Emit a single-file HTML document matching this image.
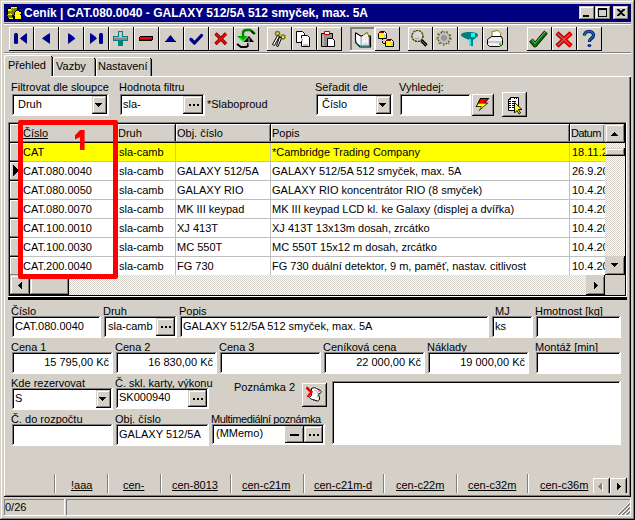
<!DOCTYPE html>
<html><head><meta charset="utf-8"><style>
html,body{margin:0;padding:0;}
body{width:635px;height:520px;position:relative;overflow:hidden;background:#d4d0c8;font-family:"Liberation Sans",sans-serif;}
div{position:absolute;box-sizing:content-box;}
.t{position:absolute;font-size:11px;line-height:13px;white-space:pre;color:#000;}
.tt{position:absolute;font-weight:bold;font-size:12px;line-height:15px;white-space:pre;color:#fff;}
u{text-decoration:underline;text-underline-offset:1px;}
</style></head><body>
<div style="left:0px;top:0px;width:635px;height:520px;background:#d4d0c8;"></div>
<div style="left:1px;top:1px;width:633px;height:1px;background:#ffffff;"></div>
<div style="left:1px;top:1px;width:1px;height:517px;background:#ffffff;"></div>
<div style="left:0px;top:519px;width:635px;height:1px;background:#000000;"></div>
<div style="left:634px;top:0px;width:1px;height:520px;background:#000000;"></div>
<div style="left:1px;top:518px;width:633px;height:1px;background:#808080;"></div>
<div style="left:633px;top:1px;width:1px;height:518px;background:#808080;"></div>
<div style="left:4px;top:4px;width:627px;height:18px;background:#000080;"></div>
<span class="tt" style="left:24px;top:6px">Ceník | CAT.080.0040 - GALAXY 512/5A 512 smyček, max. 5A</span>
<div style="left:579px;top:6px;width:16px;height:14px;background:#d4d0c8;"></div>
<div style="left:579px;top:6px;width:16px;height:1px;background:#d4d0c8;"></div>
<div style="left:579px;top:6px;width:1px;height:14px;background:#d4d0c8;"></div>
<div style="left:580px;top:7px;width:14px;height:1px;background:#ffffff;"></div>
<div style="left:580px;top:7px;width:1px;height:12px;background:#ffffff;"></div>
<div style="left:579px;top:19px;width:16px;height:1px;background:#000000;"></div>
<div style="left:594px;top:6px;width:1px;height:14px;background:#000000;"></div>
<div style="left:580px;top:18px;width:14px;height:1px;background:#808080;"></div>
<div style="left:593px;top:7px;width:1px;height:12px;background:#808080;"></div>
<div style="left:595px;top:6px;width:16px;height:14px;background:#d4d0c8;"></div>
<div style="left:595px;top:6px;width:16px;height:1px;background:#d4d0c8;"></div>
<div style="left:595px;top:6px;width:1px;height:14px;background:#d4d0c8;"></div>
<div style="left:596px;top:7px;width:14px;height:1px;background:#ffffff;"></div>
<div style="left:596px;top:7px;width:1px;height:12px;background:#ffffff;"></div>
<div style="left:595px;top:19px;width:16px;height:1px;background:#000000;"></div>
<div style="left:610px;top:6px;width:1px;height:14px;background:#000000;"></div>
<div style="left:596px;top:18px;width:14px;height:1px;background:#808080;"></div>
<div style="left:609px;top:7px;width:1px;height:12px;background:#808080;"></div>
<div style="left:613px;top:6px;width:16px;height:14px;background:#d4d0c8;"></div>
<div style="left:613px;top:6px;width:16px;height:1px;background:#d4d0c8;"></div>
<div style="left:613px;top:6px;width:1px;height:14px;background:#d4d0c8;"></div>
<div style="left:614px;top:7px;width:14px;height:1px;background:#ffffff;"></div>
<div style="left:614px;top:7px;width:1px;height:12px;background:#ffffff;"></div>
<div style="left:613px;top:19px;width:16px;height:1px;background:#000000;"></div>
<div style="left:628px;top:6px;width:1px;height:14px;background:#000000;"></div>
<div style="left:614px;top:18px;width:14px;height:1px;background:#808080;"></div>
<div style="left:627px;top:7px;width:1px;height:12px;background:#808080;"></div>
<div style="left:583px;top:15px;width:6px;height:2px;background:#000000;"></div>
<div style="left:598px;top:8px;width:9px;height:9px;background:#000000;"></div>
<div style="left:599px;top:10px;width:7px;height:6px;background:#d4d0c8;"></div>
<svg style="position:absolute;left:617px;top:9px;overflow:visible" width="8" height="7" viewBox="0 0 8 7"><path d="M0 0h2l2 2 2-2h2v1l-3 2.5 3 2.5v1h-2l-2-2-2 2h-2v-1l3-2.5-3-2.5z" fill="#000"/></svg>
<div style="left:4px;top:23px;width:627px;height:1px;background:#808080;"></div>
<div style="left:4px;top:24px;width:627px;height:1px;background:#ffffff;"></div>
<div style="left:9px;top:27px;width:24px;height:1px;background:#ffffff;"></div>
<div style="left:9px;top:27px;width:1px;height:23px;background:#ffffff;"></div>
<div style="left:9px;top:50px;width:25px;height:1px;background:#000000;"></div>
<div style="left:33px;top:27px;width:1px;height:24px;background:#000000;"></div>
<div style="left:34px;top:27px;width:24px;height:1px;background:#ffffff;"></div>
<div style="left:34px;top:27px;width:1px;height:23px;background:#ffffff;"></div>
<div style="left:34px;top:50px;width:25px;height:1px;background:#000000;"></div>
<div style="left:58px;top:27px;width:1px;height:24px;background:#000000;"></div>
<div style="left:59px;top:27px;width:24px;height:1px;background:#ffffff;"></div>
<div style="left:59px;top:27px;width:1px;height:23px;background:#ffffff;"></div>
<div style="left:59px;top:50px;width:25px;height:1px;background:#000000;"></div>
<div style="left:83px;top:27px;width:1px;height:24px;background:#000000;"></div>
<div style="left:84px;top:27px;width:24px;height:1px;background:#ffffff;"></div>
<div style="left:84px;top:27px;width:1px;height:23px;background:#ffffff;"></div>
<div style="left:84px;top:50px;width:25px;height:1px;background:#000000;"></div>
<div style="left:108px;top:27px;width:1px;height:24px;background:#000000;"></div>
<div style="left:109px;top:27px;width:24px;height:1px;background:#ffffff;"></div>
<div style="left:109px;top:27px;width:1px;height:23px;background:#ffffff;"></div>
<div style="left:109px;top:50px;width:25px;height:1px;background:#000000;"></div>
<div style="left:133px;top:27px;width:1px;height:24px;background:#000000;"></div>
<div style="left:134px;top:27px;width:24px;height:1px;background:#ffffff;"></div>
<div style="left:134px;top:27px;width:1px;height:23px;background:#ffffff;"></div>
<div style="left:134px;top:50px;width:25px;height:1px;background:#000000;"></div>
<div style="left:158px;top:27px;width:1px;height:24px;background:#000000;"></div>
<div style="left:159px;top:27px;width:24px;height:1px;background:#ffffff;"></div>
<div style="left:159px;top:27px;width:1px;height:23px;background:#ffffff;"></div>
<div style="left:159px;top:50px;width:25px;height:1px;background:#000000;"></div>
<div style="left:183px;top:27px;width:1px;height:24px;background:#000000;"></div>
<div style="left:184px;top:27px;width:24px;height:1px;background:#ffffff;"></div>
<div style="left:184px;top:27px;width:1px;height:23px;background:#ffffff;"></div>
<div style="left:184px;top:50px;width:25px;height:1px;background:#000000;"></div>
<div style="left:208px;top:27px;width:1px;height:24px;background:#000000;"></div>
<div style="left:209px;top:27px;width:24px;height:1px;background:#ffffff;"></div>
<div style="left:209px;top:27px;width:1px;height:23px;background:#ffffff;"></div>
<div style="left:209px;top:50px;width:25px;height:1px;background:#000000;"></div>
<div style="left:233px;top:27px;width:1px;height:24px;background:#000000;"></div>
<div style="left:234px;top:27px;width:24px;height:1px;background:#ffffff;"></div>
<div style="left:234px;top:27px;width:1px;height:23px;background:#ffffff;"></div>
<div style="left:234px;top:50px;width:25px;height:1px;background:#000000;"></div>
<div style="left:258px;top:27px;width:1px;height:24px;background:#000000;"></div>
<div style="left:267px;top:27px;width:24px;height:1px;background:#ffffff;"></div>
<div style="left:267px;top:27px;width:1px;height:23px;background:#ffffff;"></div>
<div style="left:267px;top:50px;width:25px;height:1px;background:#000000;"></div>
<div style="left:291px;top:27px;width:1px;height:24px;background:#000000;"></div>
<div style="left:292px;top:27px;width:24px;height:1px;background:#ffffff;"></div>
<div style="left:292px;top:27px;width:1px;height:23px;background:#ffffff;"></div>
<div style="left:292px;top:50px;width:25px;height:1px;background:#000000;"></div>
<div style="left:316px;top:27px;width:1px;height:24px;background:#000000;"></div>
<div style="left:317px;top:27px;width:24px;height:1px;background:#ffffff;"></div>
<div style="left:317px;top:27px;width:1px;height:23px;background:#ffffff;"></div>
<div style="left:317px;top:50px;width:25px;height:1px;background:#000000;"></div>
<div style="left:341px;top:27px;width:1px;height:24px;background:#000000;"></div>
<div style="left:350px;top:27px;width:25px;height:24px;background:#d4d0c8;"></div>
<div style="left:350px;top:27px;width:25px;height:1px;background:#808080;"></div>
<div style="left:350px;top:27px;width:1px;height:24px;background:#808080;"></div>
<div style="left:351px;top:28px;width:23px;height:1px;background:#808080;"></div>
<div style="left:351px;top:28px;width:1px;height:22px;background:#808080;"></div>
<div style="left:350px;top:50px;width:25px;height:1px;background:#ffffff;"></div>
<div style="left:374px;top:27px;width:1px;height:24px;background:#ffffff;"></div>
<div style="left:375px;top:27px;width:24px;height:1px;background:#ffffff;"></div>
<div style="left:375px;top:27px;width:1px;height:23px;background:#ffffff;"></div>
<div style="left:375px;top:50px;width:25px;height:1px;background:#000000;"></div>
<div style="left:399px;top:27px;width:1px;height:24px;background:#000000;"></div>
<div style="left:408px;top:27px;width:24px;height:1px;background:#ffffff;"></div>
<div style="left:408px;top:27px;width:1px;height:23px;background:#ffffff;"></div>
<div style="left:408px;top:50px;width:25px;height:1px;background:#000000;"></div>
<div style="left:432px;top:27px;width:1px;height:24px;background:#000000;"></div>
<div style="left:433px;top:27px;width:24px;height:1px;background:#ffffff;"></div>
<div style="left:433px;top:27px;width:1px;height:23px;background:#ffffff;"></div>
<div style="left:433px;top:50px;width:25px;height:1px;background:#000000;"></div>
<div style="left:457px;top:27px;width:1px;height:24px;background:#000000;"></div>
<div style="left:458px;top:27px;width:24px;height:1px;background:#ffffff;"></div>
<div style="left:458px;top:27px;width:1px;height:23px;background:#ffffff;"></div>
<div style="left:458px;top:50px;width:25px;height:1px;background:#000000;"></div>
<div style="left:482px;top:27px;width:1px;height:24px;background:#000000;"></div>
<div style="left:483px;top:27px;width:24px;height:1px;background:#ffffff;"></div>
<div style="left:483px;top:27px;width:1px;height:23px;background:#ffffff;"></div>
<div style="left:483px;top:50px;width:25px;height:1px;background:#000000;"></div>
<div style="left:507px;top:27px;width:1px;height:24px;background:#000000;"></div>
<div style="left:527px;top:27px;width:24px;height:1px;background:#ffffff;"></div>
<div style="left:527px;top:27px;width:1px;height:23px;background:#ffffff;"></div>
<div style="left:527px;top:50px;width:25px;height:1px;background:#000000;"></div>
<div style="left:551px;top:27px;width:1px;height:24px;background:#000000;"></div>
<div style="left:552px;top:27px;width:24px;height:1px;background:#ffffff;"></div>
<div style="left:552px;top:27px;width:1px;height:23px;background:#ffffff;"></div>
<div style="left:552px;top:50px;width:25px;height:1px;background:#000000;"></div>
<div style="left:576px;top:27px;width:1px;height:24px;background:#000000;"></div>
<div style="left:577px;top:27px;width:24px;height:1px;background:#ffffff;"></div>
<div style="left:577px;top:27px;width:1px;height:23px;background:#ffffff;"></div>
<div style="left:577px;top:50px;width:25px;height:1px;background:#000000;"></div>
<div style="left:601px;top:27px;width:1px;height:24px;background:#000000;"></div>
<div style="left:4px;top:52px;width:627px;height:1px;background:#808080;"></div>
<div style="left:4px;top:53px;width:627px;height:1px;background:#ffffff;"></div>
<svg style="position:absolute;left:9px;top:27px;overflow:visible" width="25" height="24" viewBox="0 0 25 24"><rect x="5" y="6" width="4" height="11" rx="1.5" fill="#000080"/><rect x="6" y="7" width="1" height="2" fill="#0000ff"/><polygon points="11,11.5 18,6 18,17" fill="#000080"/><line x1="12" y1="11" x2="17" y2="7" stroke="#0000ff" stroke-width="1"/></svg>
<svg style="position:absolute;left:34px;top:27px;overflow:visible" width="25" height="24" viewBox="0 0 25 24"><polygon points="8,11.5 16,6 16,17" fill="#000080"/><line x1="9" y1="11" x2="15" y2="7" stroke="#0000ff"/></svg>
<svg style="position:absolute;left:59px;top:27px;overflow:visible" width="25" height="24" viewBox="0 0 25 24"><polygon points="9,6 9,17 16.5,11.5" fill="#000080"/><line x1="10" y1="7" x2="15" y2="10.5" stroke="#0000ff"/></svg>
<svg style="position:absolute;left:84px;top:27px;overflow:visible" width="25" height="24" viewBox="0 0 25 24"><polygon points="6,6 6,17 13,11.5" fill="#000080"/><line x1="7" y1="7" x2="12" y2="10.5" stroke="#0000ff"/><rect x="15" y="6" width="4" height="11" rx="1.5" fill="#000080"/><rect x="16" y="7" width="1" height="2" fill="#0000ff"/></svg>
<svg style="position:absolute;left:109px;top:27px;overflow:visible" width="25" height="24" viewBox="0 0 25 24" shape-rendering="crispEdges"><path d="M9 4h5v5h5v5h-5v5h-5v-5h-5v-5h5z" fill="#008080"/><rect x="10" y="5" width="3" height="5" fill="#c8c8c8"/><rect x="5" y="10" width="13" height="3" fill="#888"/><rect x="5" y="10" width="13" height="1" fill="#b0b0b0"/></svg>
<svg style="position:absolute;left:134px;top:27px;overflow:visible" width="25" height="24" viewBox="0 0 25 24" shape-rendering="crispEdges"><rect x="5" y="9" width="14" height="5" rx="2" fill="#000"/><rect x="6" y="10" width="12" height="2" fill="#ff0000"/><rect x="6" y="12" width="12" height="1" fill="#800000"/></svg>
<svg style="position:absolute;left:159px;top:27px;overflow:visible" width="25" height="24" viewBox="0 0 25 24"><polygon points="6,15 11.5,8 17,15" fill="#000080"/><line x1="8" y1="13" x2="11" y2="9.5" stroke="#0000ff"/><rect x="6" y="14" width="11" height="1" fill="#000"/></svg>
<svg style="position:absolute;left:184px;top:27px;overflow:visible" width="25" height="24" viewBox="0 0 25 24"><polyline points="7,12.5 10.5,16 17.5,8.5" fill="none" stroke="#000080" stroke-width="3.2" stroke-linecap="round" stroke-linejoin="round"/><circle cx="7" cy="12" r="1.3" fill="#0000ff"/></svg>
<svg style="position:absolute;left:209px;top:27px;overflow:visible" width="25" height="24" viewBox="0 0 25 24"><path d="M6.5 6.5L17 17M17 6.5L6.5 17" stroke="#600000" stroke-width="3.2"/><path d="M6.5 6.5L17 17M17 6.5L6.5 17" stroke="#ff0000" stroke-width="1.8"/></svg>
<svg style="position:absolute;left:234px;top:27px;overflow:visible" width="25" height="24" viewBox="0 0 25 24"><path d="M9 13V6c0-2 2-3 4-3h3l3 2 2 2" fill="none" stroke="#008000" stroke-width="2.4"/><path d="M17 4l3 3" stroke="#000" stroke-width="1.3"/><polygon points="3,9 14,9 8.5,14" fill="#00a000"/><path d="M6 11l3 3 3-3" stroke="#00ff00" stroke-width="1.2" fill="none"/><path d="M14 16v2c0 1-1 2-3 2H7L3 17" fill="none" stroke="#000" stroke-width="1.8"/><polygon points="9.5,15 20,15 15,9" fill="#000"/><path d="M15 11v7" stroke="#bbb" stroke-width="1"/></svg>
<svg style="position:absolute;left:267px;top:27px;overflow:visible" width="25" height="24" viewBox="0 0 25 24"><circle cx="10.5" cy="6.5" r="2" fill="none" stroke="#808000" stroke-width="1.6"/><circle cx="16" cy="10" r="2" fill="none" stroke="#808000" stroke-width="1.6"/><polygon points="10.5,8.5 12.5,9.5 7.5,18.5 5.5,17.5" fill="#fff" stroke="#000" stroke-width="1"/><polygon points="12.5,10 14.5,11 11,19.5 9.5,19" fill="#fff" stroke="#000" stroke-width="1"/></svg>
<svg style="position:absolute;left:292px;top:27px;overflow:visible" width="25" height="24" viewBox="0 0 25 24"><path d="M4.5 4.5h6l2 2v9h-8z" fill="#fff" stroke="#000"/><path d="M9.5 8.5h6l2 2v9h-8z" fill="#fff" stroke="#000"/><path d="M11 17h5v2h-5z" fill="#c0c0c0"/><path d="M9 11h2v3H9z" fill="#c0c0c0"/></svg>
<svg style="position:absolute;left:317px;top:27px;overflow:visible" width="25" height="24" viewBox="0 0 25 24"><path d="M4.5 6.5h11v13h-11z" fill="#909090" stroke="#000"/><path d="M7.5 4.5h5v3h-5z" fill="#fff" stroke="#c00000"/><path d="M10.5 11.5h5l2 2v6h-7z" fill="#fff" stroke="#000"/><rect x="5" y="7" width="2" height="12" fill="#b0b0b0"/></svg>
<svg style="position:absolute;left:350px;top:27px;overflow:visible" width="25" height="24" viewBox="0 0 25 24"><path d="M6 6l5 3v10l-5-4z" fill="#fff"/><path d="M11.5 9l1.5-1 4-2.5 1 1.5v10l-6 2z" fill="#f4f4f4"/><path d="M11 9.5v9" stroke="#a0a0a0"/><path d="M13 18l4-2" stroke="#c0c0c0"/><path d="M5.5 5.5v10l4.5 4.5h10.5v-11h-2.5" fill="none" stroke="#000" stroke-width="1.1"/><path d="M6 6l5 3.2 2-1" fill="none" stroke="#000" stroke-width="1.1"/><path d="M13.5 8l3.5-2.5 1.5 2.5" fill="none" stroke="#808000" stroke-width="1.1"/><path d="M6 13.5v2l4 3.5h9.5V9.5" fill="none" stroke="#008080" stroke-width="1"/></svg>
<svg style="position:absolute;left:375px;top:27px;overflow:visible" width="25" height="24" viewBox="0 0 25 24"><g transform="translate(3,3)"><path d="M0.5 3.5l2-2h4l2 2v5h-8z" fill="#fff" stroke="#000"/><rect x="1" y="4" width="5" height="4" fill="#ffff00"/><rect x="6" y="4" width="2" height="4" fill="#c8c8c8"/><path d="M1 2.5h5" stroke="#a00000" stroke-width="1.3"/></g><g transform="translate(10,11)"><path d="M0.5 3.5l2-2h4l2 2v5h-8z" fill="#fff" stroke="#000"/><rect x="1" y="4" width="5" height="4" fill="#ffff00"/><rect x="6" y="4" width="2" height="4" fill="#c8c8c8"/><path d="M1 2.5h5" stroke="#a00000" stroke-width="1.3"/></g><rect x="7" y="12" width="1" height="1" fill="#000"/><rect x="7" y="14" width="1" height="2" fill="#000"/><rect x="8" y="16" width="2" height="1" fill="#000"/></svg>
<svg style="position:absolute;left:408px;top:27px;overflow:visible" width="25" height="24" viewBox="0 0 25 24"><circle cx="9.5" cy="9" r="5.5" fill="#d8d8d8" stroke="#000" stroke-width="1.2" stroke-dasharray="2 1"/><circle cx="9.5" cy="9" r="5.5" fill="none" stroke="#808000" stroke-width="0.6"/><path d="M7 11a3 3 0 0 0 4 0" stroke="#999" fill="none"/><path d="M13.5 13.5l5 5" stroke="#000" stroke-width="3.2"/><path d="M14 14l4 4" stroke="#808000" stroke-width="1"/></svg>
<svg style="position:absolute;left:433px;top:27px;overflow:visible" width="25" height="24" viewBox="0 0 25 24"><circle cx="11" cy="11" r="6" fill="#c0c0c0" stroke="#404040" stroke-width="1.2" stroke-dasharray="1.5 1.5"/><circle cx="11" cy="11" r="7" fill="none" stroke="#808000" stroke-width="1.3" stroke-dasharray="2 3"/><circle cx="11" cy="11" r="2.3" fill="#a0a0a0" stroke="#808080"/></svg>
<svg style="position:absolute;left:458px;top:27px;overflow:visible" width="25" height="24" viewBox="0 0 25 24"><path d="M3 8c0-2 3-3 8.5-3S20 6 20 8c0 1.5-2 3-5 5v6h-3.5v-6C6 11 3 9.5 3 8z" fill="#008080"/><rect x="13" y="6" width="4" height="4" fill="#00ffff"/><rect x="11" y="12" width="2" height="7" fill="#00ffff"/></svg>
<svg style="position:absolute;left:483px;top:27px;overflow:visible" width="25" height="24" viewBox="0 0 25 24"><path d="M9 4.5l6-1 3 3-2 5h-7z" fill="#fff" stroke="#808000"/><path d="M4.5 12.5l4-3h10l1 3v5l-3 2h-10l-2-2z" fill="#f0f0f0" stroke="#000"/><path d="M5 15h14" stroke="#a0a0a0"/><rect x="16" y="16" width="2" height="2" fill="#00ff00"/></svg>
<svg style="position:absolute;left:527px;top:27px;overflow:visible" width="25" height="24" viewBox="0 0 25 24"><path d="M4 13l4 5 11-13" fill="none" stroke="#000" stroke-width="4.5" stroke-linejoin="round"/><path d="M4 13l4 5 11-13" fill="none" stroke="#008000" stroke-width="3"/><path d="M5 12.3l3 4 10.5-12" fill="none" stroke="#a0a0a0" stroke-width="0.9"/></svg>
<svg style="position:absolute;left:552px;top:27px;overflow:visible" width="25" height="24" viewBox="0 0 25 24"><path d="M5 6L19 19M19 6L5 19" stroke="#c00000" stroke-width="4.5"/><path d="M5 6L19 19M19 6L5 19" stroke="#ff0000" stroke-width="3"/><path d="M6 7L18 18M18 7L6 18" stroke="#909090" stroke-width="1"/></svg>
<svg style="position:absolute;left:577px;top:27px;overflow:visible" width="25" height="24" viewBox="0 0 25 24"><path d="M7.5 8.5c0-2.5 2-4 4.5-4s4.5 1.5 4.5 3.8c0 1.8-1.3 2.7-2.5 3.5s-1.6 1.7-1.6 3.2" fill="none" stroke="#000080" stroke-width="3.2"/><path d="M7.5 8.5c0-2.5 2-4 4.5-4s4.5 1.5 4.5 3.8c0 1.8-1.3 2.7-2.5 3.5s-1.6 1.7-1.6 3.2" fill="none" stroke="#008080" stroke-width="1.4"/><ellipse cx="12.4" cy="18.6" rx="1.9" ry="1.4" fill="#000080"/><circle cx="12.4" cy="18.5" r="0.6" fill="#008080"/></svg>
<svg style="position:absolute;left:6px;top:6px;overflow:visible" width="16" height="14" viewBox="0 0 16 14" shape-rendering="crispEdges"><rect x="5" y="0" width="6" height="1" fill="#000000"/><rect x="4" y="1" width="1" height="1" fill="#000000"/><rect x="5" y="1" width="6" height="1" fill="#ffff00"/><rect x="11" y="1" width="1" height="1" fill="#000000"/><rect x="2" y="2" width="3" height="1" fill="#000000"/><rect x="5" y="2" width="1" height="1" fill="#c0c0c0"/><rect x="6" y="2" width="1" height="1" fill="#808000"/><rect x="7" y="2" width="1" height="1" fill="#c0c0c0"/><rect x="8" y="2" width="3" height="1" fill="#808000"/><rect x="11" y="2" width="2" height="1" fill="#000000"/><rect x="1" y="3" width="1" height="1" fill="#000000"/><rect x="2" y="3" width="3" height="1" fill="#ffff00"/><rect x="5" y="3" width="6" height="1" fill="#808000"/><rect x="11" y="3" width="1" height="1" fill="#000000"/><rect x="1" y="4" width="1" height="1" fill="#000000"/><rect x="2" y="4" width="3" height="1" fill="#ffff00"/><rect x="5" y="4" width="1" height="1" fill="#c0c0c0"/><rect x="6" y="4" width="4" height="1" fill="#808000"/><rect x="10" y="4" width="1" height="1" fill="#000000"/><rect x="1" y="5" width="1" height="1" fill="#000000"/><rect x="2" y="5" width="7" height="1" fill="#808000"/><rect x="9" y="5" width="1" height="1" fill="#000000"/><rect x="10" y="5" width="3" height="1" fill="#ffff00"/><rect x="13" y="5" width="1" height="1" fill="#000000"/><rect x="1" y="6" width="1" height="1" fill="#000000"/><rect x="2" y="6" width="6" height="1" fill="#808000"/><rect x="8" y="6" width="1" height="1" fill="#000000"/><rect x="9" y="6" width="6" height="1" fill="#ffff00"/><rect x="15" y="6" width="1" height="1" fill="#000000"/><rect x="1" y="7" width="1" height="1" fill="#000000"/><rect x="2" y="7" width="2" height="1" fill="#808000"/><rect x="4" y="7" width="1" height="1" fill="#c0c0c0"/><rect x="5" y="7" width="3" height="1" fill="#808000"/><rect x="8" y="7" width="1" height="1" fill="#000000"/><rect x="9" y="7" width="6" height="1" fill="#ffff00"/><rect x="15" y="7" width="1" height="1" fill="#000000"/><rect x="0" y="8" width="2" height="1" fill="#000000"/><rect x="2" y="8" width="4" height="1" fill="#ffff00"/><rect x="6" y="8" width="2" height="1" fill="#808000"/><rect x="8" y="8" width="1" height="1" fill="#000000"/><rect x="9" y="8" width="5" height="1" fill="#ffff00"/><rect x="14" y="8" width="1" height="1" fill="#000000"/><rect x="15" y="8" width="1" height="1" fill="#000000"/><rect x="1" y="9" width="5" height="1" fill="#808000"/><rect x="6" y="9" width="2" height="1" fill="#000000"/><rect x="8" y="9" width="1" height="1" fill="#808000"/><rect x="9" y="9" width="6" height="1" fill="#ffff00"/><rect x="15" y="9" width="1" height="1" fill="#000000"/><rect x="1" y="10" width="1" height="1" fill="#000000"/><rect x="2" y="10" width="4" height="1" fill="#808000"/><rect x="6" y="10" width="3" height="1" fill="#000000"/><rect x="9" y="10" width="6" height="1" fill="#ffff00"/><rect x="15" y="10" width="1" height="1" fill="#000000"/><rect x="2" y="11" width="5" height="1" fill="#808000"/><rect x="7" y="11" width="2" height="1" fill="#000000"/><rect x="9" y="11" width="6" height="1" fill="#ffff00"/><rect x="15" y="11" width="1" height="1" fill="#000000"/><rect x="2" y="12" width="1" height="1" fill="#000000"/><rect x="3" y="12" width="4" height="1" fill="#ffff00"/><rect x="7" y="12" width="2" height="1" fill="#000000"/><rect x="9" y="12" width="6" height="1" fill="#ffff00"/><rect x="15" y="12" width="1" height="1" fill="#000000"/><rect x="2" y="13" width="13" height="1" fill="#000000"/></svg>
<div style="left:4px;top:76px;width:627px;height:1px;background:#ffffff;"></div>
<div style="left:4px;top:55px;width:1px;height:442px;background:#ffffff;"></div>
<div style="left:630px;top:76px;width:1px;height:421px;background:#000000;"></div>
<div style="left:629px;top:77px;width:1px;height:419px;background:#808080;"></div>
<div style="left:4px;top:496px;width:627px;height:1px;background:#000000;"></div>
<div style="left:5px;top:495px;width:625px;height:1px;background:#808080;"></div>
<div style="left:5px;top:56px;width:46px;height:21px;background:#d4d0c8;"></div>
<div style="left:6px;top:55px;width:45px;height:1px;background:#ffffff;"></div>
<div style="left:5px;top:56px;width:1px;height:1px;background:#ffffff;"></div>
<div style="left:4px;top:57px;width:1px;height:20px;background:#ffffff;"></div>
<div style="left:51px;top:56px;width:1px;height:20px;background:#808080;"></div>
<div style="left:52px;top:57px;width:1px;height:19px;background:#000000;"></div>
<div style="left:51px;top:56px;width:1px;height:1px;background:#000000;"></div>
<span class="t" style="left:8px;top:59px;">Přehled</span>
<div style="left:54px;top:57px;width:40px;height:1px;background:#ffffff;"></div>
<div style="left:53px;top:58px;width:1px;height:1px;background:#ffffff;"></div>
<div style="left:53px;top:59px;width:1px;height:17px;background:#ffffff;"></div>
<div style="left:94px;top:58px;width:1px;height:18px;background:#808080;"></div>
<div style="left:95px;top:59px;width:1px;height:17px;background:#000000;"></div>
<div style="left:94px;top:58px;width:1px;height:1px;background:#000000;"></div>
<span class="t" style="left:56px;top:60px;">Vazby</span>
<div style="left:97px;top:57px;width:53px;height:1px;background:#ffffff;"></div>
<div style="left:96px;top:58px;width:1px;height:1px;background:#ffffff;"></div>
<div style="left:96px;top:59px;width:1px;height:17px;background:#ffffff;"></div>
<div style="left:150px;top:58px;width:1px;height:18px;background:#808080;"></div>
<div style="left:151px;top:59px;width:1px;height:17px;background:#000000;"></div>
<div style="left:150px;top:58px;width:1px;height:1px;background:#000000;"></div>
<span class="t" style="left:98px;top:60px;">Nastavení</span>
<div style="left:53px;top:76px;width:578px;height:1px;background:#ffffff;"></div>
<span class="t" style="left:11px;top:81px;">Filtrovat dle sloupce</span>
<div style="left:12px;top:94px;width:97px;height:22px;background:#ffffff;"></div>
<div style="left:12px;top:94px;width:96px;height:1px;background:#808080;"></div>
<div style="left:12px;top:94px;width:1px;height:21px;background:#808080;"></div>
<div style="left:13px;top:95px;width:94px;height:1px;background:#000000;"></div>
<div style="left:13px;top:95px;width:1px;height:19px;background:#000000;"></div>
<div style="left:92px;top:96px;width:15px;height:18px;background:#d4d0c8;"></div>
<div style="left:92px;top:96px;width:15px;height:1px;background:#d4d0c8;"></div>
<div style="left:92px;top:96px;width:1px;height:18px;background:#d4d0c8;"></div>
<div style="left:93px;top:97px;width:13px;height:1px;background:#ffffff;"></div>
<div style="left:93px;top:97px;width:1px;height:16px;background:#ffffff;"></div>
<div style="left:92px;top:113px;width:15px;height:1px;background:#000000;"></div>
<div style="left:106px;top:96px;width:1px;height:18px;background:#000000;"></div>
<div style="left:93px;top:112px;width:13px;height:1px;background:#808080;"></div>
<div style="left:105px;top:97px;width:1px;height:16px;background:#808080;"></div>
<svg style="position:absolute;left:95px;top:103px;overflow:visible" width="7" height="4" viewBox="0 0 7 4" shape-rendering="crispEdges"><rect x="0" y="0" width="7" height="1" fill="#000"/><rect x="1" y="1" width="5" height="1" fill="#000"/><rect x="2" y="2" width="3" height="1" fill="#000"/><rect x="3" y="3" width="1" height="1" fill="#000"/></svg>
<span class="t" style="left:18px;top:98px;">Druh</span>
<span class="t" style="left:119px;top:81px;">Hodnota filtru</span>
<div style="left:120px;top:94px;width:85px;height:22px;background:#ffffff;"></div>
<div style="left:120px;top:94px;width:84px;height:1px;background:#808080;"></div>
<div style="left:120px;top:94px;width:1px;height:21px;background:#808080;"></div>
<div style="left:121px;top:95px;width:82px;height:1px;background:#000000;"></div>
<div style="left:121px;top:95px;width:1px;height:19px;background:#000000;"></div>
<div style="left:183px;top:96px;width:20px;height:18px;background:#d4d0c8;"></div>
<div style="left:183px;top:96px;width:20px;height:1px;background:#d4d0c8;"></div>
<div style="left:183px;top:96px;width:1px;height:18px;background:#d4d0c8;"></div>
<div style="left:184px;top:97px;width:18px;height:1px;background:#ffffff;"></div>
<div style="left:184px;top:97px;width:1px;height:16px;background:#ffffff;"></div>
<div style="left:183px;top:113px;width:20px;height:1px;background:#000000;"></div>
<div style="left:202px;top:96px;width:1px;height:18px;background:#000000;"></div>
<div style="left:184px;top:112px;width:18px;height:1px;background:#808080;"></div>
<div style="left:201px;top:97px;width:1px;height:16px;background:#808080;"></div>
<div style="left:189px;top:104px;width:2px;height:2px;background:#000000;"></div>
<div style="left:193px;top:104px;width:2px;height:2px;background:#000000;"></div>
<div style="left:197px;top:104px;width:2px;height:2px;background:#000000;"></div>
<span class="t" style="left:123px;top:98px;">sla-</span>
<span class="t" style="left:207px;top:98px;">*Slaboproud</span>
<span class="t" style="left:315px;top:81px;">Seřadit dle</span>
<div style="left:316px;top:94px;width:77px;height:22px;background:#ffffff;"></div>
<div style="left:316px;top:94px;width:76px;height:1px;background:#808080;"></div>
<div style="left:316px;top:94px;width:1px;height:21px;background:#808080;"></div>
<div style="left:317px;top:95px;width:74px;height:1px;background:#000000;"></div>
<div style="left:317px;top:95px;width:1px;height:19px;background:#000000;"></div>
<div style="left:376px;top:96px;width:15px;height:18px;background:#d4d0c8;"></div>
<div style="left:376px;top:96px;width:15px;height:1px;background:#d4d0c8;"></div>
<div style="left:376px;top:96px;width:1px;height:18px;background:#d4d0c8;"></div>
<div style="left:377px;top:97px;width:13px;height:1px;background:#ffffff;"></div>
<div style="left:377px;top:97px;width:1px;height:16px;background:#ffffff;"></div>
<div style="left:376px;top:113px;width:15px;height:1px;background:#000000;"></div>
<div style="left:390px;top:96px;width:1px;height:18px;background:#000000;"></div>
<div style="left:377px;top:112px;width:13px;height:1px;background:#808080;"></div>
<div style="left:389px;top:97px;width:1px;height:16px;background:#808080;"></div>
<svg style="position:absolute;left:379px;top:103px;overflow:visible" width="7" height="4" viewBox="0 0 7 4" shape-rendering="crispEdges"><rect x="0" y="0" width="7" height="1" fill="#000"/><rect x="1" y="1" width="5" height="1" fill="#000"/><rect x="2" y="2" width="3" height="1" fill="#000"/><rect x="3" y="3" width="1" height="1" fill="#000"/></svg>
<span class="t" style="left:322px;top:98px;">Číslo</span>
<span class="t" style="left:399px;top:81px;">Vyhledej:</span>
<div style="left:400px;top:94px;width:71px;height:22px;background:#ffffff;"></div>
<div style="left:400px;top:94px;width:70px;height:1px;background:#808080;"></div>
<div style="left:400px;top:94px;width:1px;height:21px;background:#808080;"></div>
<div style="left:401px;top:95px;width:68px;height:1px;background:#000000;"></div>
<div style="left:401px;top:95px;width:1px;height:19px;background:#000000;"></div>
<div style="left:472px;top:94px;width:22px;height:22px;background:#d4d0c8;"></div>
<div style="left:472px;top:94px;width:22px;height:1px;background:#ffffff;"></div>
<div style="left:472px;top:94px;width:1px;height:22px;background:#ffffff;"></div>
<div style="left:472px;top:115px;width:22px;height:1px;background:#000000;"></div>
<div style="left:493px;top:94px;width:1px;height:22px;background:#000000;"></div>
<div style="left:473px;top:114px;width:20px;height:1px;background:#808080;"></div>
<div style="left:492px;top:95px;width:1px;height:20px;background:#808080;"></div>
<svg style="position:absolute;left:472px;top:94px;overflow:visible" width="22" height="22" viewBox="0 0 22 22"><g transform="translate(0.9,4.4) scale(0.92) translate(-1.5,-4)"><polygon points="9.3,3.6 19.5,3.6 15.3,8.6 18.5,8.6 7.5,18.3 10.3,13.4 4.4,13.4 6.8,8.6" fill="#000"/><polygon points="10,4.6 17.6,4.6 13.6,9.4 7.8,9.4" fill="#ff0000"/><polygon points="7.4,9.6 16.6,9.6 9.2,16.2 11.4,12.5 5.8,12.5" fill="#ffff00"/></g></svg>
<div style="left:502px;top:92px;width:25px;height:25px;background:#d4d0c8;"></div>
<div style="left:502px;top:92px;width:25px;height:1px;background:#ffffff;"></div>
<div style="left:502px;top:92px;width:1px;height:25px;background:#ffffff;"></div>
<div style="left:502px;top:116px;width:25px;height:1px;background:#000000;"></div>
<div style="left:526px;top:92px;width:1px;height:25px;background:#000000;"></div>
<div style="left:503px;top:115px;width:23px;height:1px;background:#808080;"></div>
<div style="left:525px;top:93px;width:1px;height:23px;background:#808080;"></div>
<svg style="position:absolute;left:502px;top:92px;overflow:visible" width="25" height="25" viewBox="0 0 25 25"><path d="M6.5 7.5l2-2h8v13h-10z" fill="#fff" stroke="#000"/><path d="M6.5 7.5h2v-2" fill="#909090" stroke="#000"/><g fill="#000"><rect x="7" y="9" width="2" height="1"/><rect x="10" y="9" width="4" height="1"/><rect x="7" y="11" width="2" height="1"/><rect x="10" y="11" width="4" height="1"/><rect x="7" y="13" width="2" height="1"/><rect x="10" y="13" width="3" height="1"/><rect x="7" y="15" width="2" height="1"/><rect x="10" y="15" width="2" height="1"/><rect x="12" y="6" width="1" height="1"/><rect x="14" y="6" width="1" height="1"/></g><polygon points="12.5,10.5 12.5,21 15,18.5 17,22 18.5,21 16.5,17.5 20,17.5" fill="#ffff00" stroke="#000" stroke-width="0.9"/></svg>
<div style="left:8px;top:122px;width:619px;height:175px;background:#ffffff;"></div>
<div style="left:8px;top:122px;width:618px;height:1px;background:#808080;"></div>
<div style="left:8px;top:122px;width:1px;height:174px;background:#808080;"></div>
<div style="left:9px;top:123px;width:617px;height:1px;background:#000000;"></div>
<div style="left:9px;top:123px;width:1px;height:173px;background:#000000;"></div>
<div style="left:625px;top:123px;width:1px;height:173px;background:#000000;"></div>
<div style="left:9px;top:295px;width:617px;height:1px;background:#000000;"></div>
<div style="left:626px;top:122px;width:1px;height:175px;background:#ffffff;"></div>
<div style="left:8px;top:296px;width:619px;height:1px;background:#ffffff;"></div>
<div style="left:10px;top:124px;width:595px;height:19px;background:#d4d0c8;"></div>
<div style="left:10px;top:124px;width:11px;height:1px;background:#ffffff;"></div>
<div style="left:10px;top:124px;width:1px;height:18px;background:#ffffff;"></div>
<div style="left:20px;top:125px;width:1px;height:17px;background:#808080;"></div>
<div style="left:21px;top:124px;width:1px;height:19px;background:#000000;"></div>
<div style="left:22px;top:124px;width:95px;height:1px;background:#ffffff;"></div>
<div style="left:22px;top:124px;width:1px;height:18px;background:#ffffff;"></div>
<div style="left:116px;top:125px;width:1px;height:17px;background:#808080;"></div>
<div style="left:117px;top:124px;width:1px;height:19px;background:#000000;"></div>
<div style="left:118px;top:124px;width:57px;height:1px;background:#ffffff;"></div>
<div style="left:118px;top:124px;width:1px;height:18px;background:#ffffff;"></div>
<div style="left:174px;top:125px;width:1px;height:17px;background:#808080;"></div>
<div style="left:175px;top:124px;width:1px;height:19px;background:#000000;"></div>
<div style="left:176px;top:124px;width:94px;height:1px;background:#ffffff;"></div>
<div style="left:176px;top:124px;width:1px;height:18px;background:#ffffff;"></div>
<div style="left:269px;top:125px;width:1px;height:17px;background:#808080;"></div>
<div style="left:270px;top:124px;width:1px;height:19px;background:#000000;"></div>
<div style="left:271px;top:124px;width:298px;height:1px;background:#ffffff;"></div>
<div style="left:271px;top:124px;width:1px;height:18px;background:#ffffff;"></div>
<div style="left:568px;top:125px;width:1px;height:17px;background:#808080;"></div>
<div style="left:569px;top:124px;width:1px;height:19px;background:#000000;"></div>
<div style="left:570px;top:124px;width:34px;height:1px;background:#ffffff;"></div>
<div style="left:570px;top:124px;width:1px;height:18px;background:#ffffff;"></div>
<div style="left:10px;top:141px;width:595px;height:1px;background:#808080;"></div>
<div style="left:10px;top:142px;width:595px;height:1px;background:#000000;"></div>
<div style="left:603px;top:125px;width:1px;height:17px;background:#808080;"></div>
<span class="t" style="left:23px;top:127px;"><u>Číslo</u></span>
<span class="t" style="left:118px;top:127px;">Druh</span>
<span class="t" style="left:177px;top:127px;">Obj. číslo</span>
<span class="t" style="left:272px;top:127px;">Popis</span>
<span class="t" style="left:571px;top:127px;letter-spacing:-0.5px">Datum</span>
<div style="left:22px;top:143px;width:583px;height:18px;background:#ffff00;"></div>
<div style="left:22px;top:161px;width:583px;height:1px;background:#c0c0c0;"></div>
<div style="left:10px;top:143px;width:12px;height:19px;background:#d4d0c8;"></div>
<div style="left:10px;top:143px;width:11px;height:1px;background:#ffffff;"></div>
<div style="left:10px;top:143px;width:1px;height:18px;background:#ffffff;"></div>
<div style="left:10px;top:160px;width:11px;height:1px;background:#808080;"></div>
<div style="left:20px;top:143px;width:1px;height:18px;background:#808080;"></div>
<div style="left:10px;top:161px;width:12px;height:1px;background:#000000;"></div>
<div style="left:21px;top:143px;width:1px;height:19px;background:#000000;"></div>
<div style="left:117px;top:143px;width:1px;height:19px;background:#c0c0c0;"></div>
<div style="left:175px;top:143px;width:1px;height:19px;background:#c0c0c0;"></div>
<div style="left:270px;top:143px;width:1px;height:19px;background:#c0c0c0;"></div>
<div style="left:569px;top:143px;width:1px;height:19px;background:#c0c0c0;"></div>
<span class="t" style="left:23px;top:146px;">CAT</span>
<span class="t" style="left:119px;top:146px;">sla-camb</span>
<span class="t" style="left:177px;top:146px;"></span>
<span class="t" style="left:272px;top:146px;">*Cambridge Trading Company</span>
<span class="t" style="left:572px;top:146px;width:33px;overflow:hidden">18.11.2004</span>
<div style="left:22px;top:162px;width:583px;height:18px;background:#ffffff;"></div>
<div style="left:22px;top:180px;width:583px;height:1px;background:#c0c0c0;"></div>
<div style="left:10px;top:162px;width:12px;height:19px;background:#d4d0c8;"></div>
<div style="left:10px;top:162px;width:11px;height:1px;background:#ffffff;"></div>
<div style="left:10px;top:162px;width:1px;height:18px;background:#ffffff;"></div>
<div style="left:10px;top:179px;width:11px;height:1px;background:#808080;"></div>
<div style="left:20px;top:162px;width:1px;height:18px;background:#808080;"></div>
<div style="left:10px;top:180px;width:12px;height:1px;background:#000000;"></div>
<div style="left:21px;top:162px;width:1px;height:19px;background:#000000;"></div>
<div style="left:117px;top:162px;width:1px;height:19px;background:#c0c0c0;"></div>
<div style="left:175px;top:162px;width:1px;height:19px;background:#c0c0c0;"></div>
<div style="left:270px;top:162px;width:1px;height:19px;background:#c0c0c0;"></div>
<div style="left:569px;top:162px;width:1px;height:19px;background:#c0c0c0;"></div>
<span class="t" style="left:23px;top:165px;">CAT.080.0040</span>
<span class="t" style="left:119px;top:165px;">sla-camb</span>
<span class="t" style="left:177px;top:165px;">GALAXY 512/5A</span>
<span class="t" style="left:272px;top:165px;">GALAXY 512/5A 512 smyček, max. 5A</span>
<span class="t" style="left:572px;top:165px;width:33px;overflow:hidden">26.9.2005</span>
<div style="left:22px;top:181px;width:583px;height:18px;background:#ffffff;"></div>
<div style="left:22px;top:199px;width:583px;height:1px;background:#c0c0c0;"></div>
<div style="left:10px;top:181px;width:12px;height:19px;background:#d4d0c8;"></div>
<div style="left:10px;top:181px;width:11px;height:1px;background:#ffffff;"></div>
<div style="left:10px;top:181px;width:1px;height:18px;background:#ffffff;"></div>
<div style="left:10px;top:198px;width:11px;height:1px;background:#808080;"></div>
<div style="left:20px;top:181px;width:1px;height:18px;background:#808080;"></div>
<div style="left:10px;top:199px;width:12px;height:1px;background:#000000;"></div>
<div style="left:21px;top:181px;width:1px;height:19px;background:#000000;"></div>
<div style="left:117px;top:181px;width:1px;height:19px;background:#c0c0c0;"></div>
<div style="left:175px;top:181px;width:1px;height:19px;background:#c0c0c0;"></div>
<div style="left:270px;top:181px;width:1px;height:19px;background:#c0c0c0;"></div>
<div style="left:569px;top:181px;width:1px;height:19px;background:#c0c0c0;"></div>
<span class="t" style="left:23px;top:184px;">CAT.080.0050</span>
<span class="t" style="left:119px;top:184px;">sla-camb</span>
<span class="t" style="left:177px;top:184px;">GALAXY RIO</span>
<span class="t" style="left:272px;top:184px;">GALAXY RIO koncentrátor RIO (8 smyček)</span>
<span class="t" style="left:572px;top:184px;width:33px;overflow:hidden">10.4.2003</span>
<div style="left:22px;top:200px;width:583px;height:18px;background:#ffffff;"></div>
<div style="left:22px;top:218px;width:583px;height:1px;background:#c0c0c0;"></div>
<div style="left:10px;top:200px;width:12px;height:19px;background:#d4d0c8;"></div>
<div style="left:10px;top:200px;width:11px;height:1px;background:#ffffff;"></div>
<div style="left:10px;top:200px;width:1px;height:18px;background:#ffffff;"></div>
<div style="left:10px;top:217px;width:11px;height:1px;background:#808080;"></div>
<div style="left:20px;top:200px;width:1px;height:18px;background:#808080;"></div>
<div style="left:10px;top:218px;width:12px;height:1px;background:#000000;"></div>
<div style="left:21px;top:200px;width:1px;height:19px;background:#000000;"></div>
<div style="left:117px;top:200px;width:1px;height:19px;background:#c0c0c0;"></div>
<div style="left:175px;top:200px;width:1px;height:19px;background:#c0c0c0;"></div>
<div style="left:270px;top:200px;width:1px;height:19px;background:#c0c0c0;"></div>
<div style="left:569px;top:200px;width:1px;height:19px;background:#c0c0c0;"></div>
<span class="t" style="left:23px;top:203px;">CAT.080.0070</span>
<span class="t" style="left:119px;top:203px;">sla-camb</span>
<span class="t" style="left:177px;top:203px;">MK III keypad</span>
<span class="t" style="left:272px;top:203px;">MK III keypad LCD kl. ke Galaxy (displej a dvířka)</span>
<span class="t" style="left:572px;top:203px;width:33px;overflow:hidden">10.4.2003</span>
<div style="left:22px;top:219px;width:583px;height:18px;background:#ffffff;"></div>
<div style="left:22px;top:237px;width:583px;height:1px;background:#c0c0c0;"></div>
<div style="left:10px;top:219px;width:12px;height:19px;background:#d4d0c8;"></div>
<div style="left:10px;top:219px;width:11px;height:1px;background:#ffffff;"></div>
<div style="left:10px;top:219px;width:1px;height:18px;background:#ffffff;"></div>
<div style="left:10px;top:236px;width:11px;height:1px;background:#808080;"></div>
<div style="left:20px;top:219px;width:1px;height:18px;background:#808080;"></div>
<div style="left:10px;top:237px;width:12px;height:1px;background:#000000;"></div>
<div style="left:21px;top:219px;width:1px;height:19px;background:#000000;"></div>
<div style="left:117px;top:219px;width:1px;height:19px;background:#c0c0c0;"></div>
<div style="left:175px;top:219px;width:1px;height:19px;background:#c0c0c0;"></div>
<div style="left:270px;top:219px;width:1px;height:19px;background:#c0c0c0;"></div>
<div style="left:569px;top:219px;width:1px;height:19px;background:#c0c0c0;"></div>
<span class="t" style="left:23px;top:222px;">CAT.100.0010</span>
<span class="t" style="left:119px;top:222px;">sla-camb</span>
<span class="t" style="left:177px;top:222px;">XJ 413T</span>
<span class="t" style="left:272px;top:222px;">XJ 413T 13x13m dosah, zrcátko</span>
<span class="t" style="left:572px;top:222px;width:33px;overflow:hidden">10.4.2003</span>
<div style="left:22px;top:238px;width:583px;height:18px;background:#ffffff;"></div>
<div style="left:22px;top:256px;width:583px;height:1px;background:#c0c0c0;"></div>
<div style="left:10px;top:238px;width:12px;height:19px;background:#d4d0c8;"></div>
<div style="left:10px;top:238px;width:11px;height:1px;background:#ffffff;"></div>
<div style="left:10px;top:238px;width:1px;height:18px;background:#ffffff;"></div>
<div style="left:10px;top:255px;width:11px;height:1px;background:#808080;"></div>
<div style="left:20px;top:238px;width:1px;height:18px;background:#808080;"></div>
<div style="left:10px;top:256px;width:12px;height:1px;background:#000000;"></div>
<div style="left:21px;top:238px;width:1px;height:19px;background:#000000;"></div>
<div style="left:117px;top:238px;width:1px;height:19px;background:#c0c0c0;"></div>
<div style="left:175px;top:238px;width:1px;height:19px;background:#c0c0c0;"></div>
<div style="left:270px;top:238px;width:1px;height:19px;background:#c0c0c0;"></div>
<div style="left:569px;top:238px;width:1px;height:19px;background:#c0c0c0;"></div>
<span class="t" style="left:23px;top:241px;">CAT.100.0030</span>
<span class="t" style="left:119px;top:241px;">sla-camb</span>
<span class="t" style="left:177px;top:241px;">MC 550T</span>
<span class="t" style="left:272px;top:241px;">MC 550T 15x12 m dosah, zrcátko</span>
<span class="t" style="left:572px;top:241px;width:33px;overflow:hidden">10.4.2003</span>
<div style="left:22px;top:257px;width:583px;height:18px;background:#ffffff;"></div>
<div style="left:22px;top:275px;width:583px;height:1px;background:#c0c0c0;"></div>
<div style="left:10px;top:257px;width:12px;height:19px;background:#d4d0c8;"></div>
<div style="left:10px;top:257px;width:11px;height:1px;background:#ffffff;"></div>
<div style="left:10px;top:257px;width:1px;height:18px;background:#ffffff;"></div>
<div style="left:10px;top:274px;width:11px;height:1px;background:#808080;"></div>
<div style="left:20px;top:257px;width:1px;height:18px;background:#808080;"></div>
<div style="left:10px;top:275px;width:12px;height:1px;background:#000000;"></div>
<div style="left:21px;top:257px;width:1px;height:19px;background:#000000;"></div>
<div style="left:117px;top:257px;width:1px;height:19px;background:#c0c0c0;"></div>
<div style="left:175px;top:257px;width:1px;height:19px;background:#c0c0c0;"></div>
<div style="left:270px;top:257px;width:1px;height:19px;background:#c0c0c0;"></div>
<div style="left:569px;top:257px;width:1px;height:19px;background:#c0c0c0;"></div>
<span class="t" style="left:23px;top:260px;">CAT.200.0040</span>
<span class="t" style="left:119px;top:260px;">sla-camb</span>
<span class="t" style="left:177px;top:260px;">FG 730</span>
<span class="t" style="left:272px;top:260px;">FG 730 duální detektor, 9 m, paměť, nastav. citlivost</span>
<span class="t" style="left:572px;top:260px;width:33px;overflow:hidden">10.4.2003</span>
<svg style="position:absolute;left:13px;top:165px;overflow:visible" width="6" height="11" viewBox="0 0 6 11" shape-rendering="crispEdges"><rect x="0" y="0" width="1" height="11" fill="#000"/><rect x="1" y="1" width="1" height="9" fill="#000"/><rect x="2" y="2" width="1" height="7" fill="#000"/><rect x="3" y="3" width="1" height="5" fill="#000"/><rect x="4" y="4" width="1" height="3" fill="#000"/><rect x="5" y="5" width="1" height="1" fill="#000"/></svg>
<div style="left:605px;top:124px;width:20px;height:151px;background:#ffffff;background-image:conic-gradient(#d4d0c8 25%,#fff 25% 50%,#d4d0c8 50% 75%,#fff 75%);background-size:2px 2px"></div>
<div style="left:605px;top:124px;width:20px;height:19px;background:#d4d0c8;"></div>
<div style="left:605px;top:124px;width:20px;height:1px;background:#d4d0c8;"></div>
<div style="left:605px;top:124px;width:1px;height:19px;background:#d4d0c8;"></div>
<div style="left:606px;top:125px;width:18px;height:1px;background:#ffffff;"></div>
<div style="left:606px;top:125px;width:1px;height:17px;background:#ffffff;"></div>
<div style="left:605px;top:142px;width:20px;height:1px;background:#000000;"></div>
<div style="left:624px;top:124px;width:1px;height:19px;background:#000000;"></div>
<div style="left:606px;top:141px;width:18px;height:1px;background:#808080;"></div>
<div style="left:623px;top:125px;width:1px;height:17px;background:#808080;"></div>
<svg style="position:absolute;left:611px;top:132px;overflow:visible" width="7" height="4" viewBox="0 0 7 4" shape-rendering="crispEdges"><rect x="0" y="3" width="7" height="1" fill="#000"/><rect x="1" y="2" width="5" height="1" fill="#000"/><rect x="2" y="1" width="3" height="1" fill="#000"/><rect x="3" y="0" width="1" height="1" fill="#000"/></svg>
<div style="left:605px;top:148px;width:20px;height:8px;background:#d4d0c8;"></div>
<div style="left:605px;top:148px;width:20px;height:1px;background:#d4d0c8;"></div>
<div style="left:605px;top:148px;width:1px;height:8px;background:#d4d0c8;"></div>
<div style="left:606px;top:149px;width:18px;height:1px;background:#ffffff;"></div>
<div style="left:606px;top:149px;width:1px;height:6px;background:#ffffff;"></div>
<div style="left:605px;top:155px;width:20px;height:1px;background:#000000;"></div>
<div style="left:624px;top:148px;width:1px;height:8px;background:#000000;"></div>
<div style="left:606px;top:154px;width:18px;height:1px;background:#808080;"></div>
<div style="left:623px;top:149px;width:1px;height:6px;background:#808080;"></div>
<div style="left:605px;top:256px;width:20px;height:19px;background:#d4d0c8;"></div>
<div style="left:605px;top:256px;width:20px;height:1px;background:#d4d0c8;"></div>
<div style="left:605px;top:256px;width:1px;height:19px;background:#d4d0c8;"></div>
<div style="left:606px;top:257px;width:18px;height:1px;background:#ffffff;"></div>
<div style="left:606px;top:257px;width:1px;height:17px;background:#ffffff;"></div>
<div style="left:605px;top:274px;width:20px;height:1px;background:#000000;"></div>
<div style="left:624px;top:256px;width:1px;height:19px;background:#000000;"></div>
<div style="left:606px;top:273px;width:18px;height:1px;background:#808080;"></div>
<div style="left:623px;top:257px;width:1px;height:17px;background:#808080;"></div>
<div style="left:606px;top:257px;width:18px;height:1px;background:#d4d0c8;"></div>
<div style="left:606px;top:257px;width:1px;height:17px;background:#d4d0c8;"></div>
<svg style="position:absolute;left:611px;top:263px;overflow:visible" width="7" height="4" viewBox="0 0 7 4" shape-rendering="crispEdges"><rect x="0" y="0" width="7" height="1" fill="#000"/><rect x="1" y="1" width="5" height="1" fill="#000"/><rect x="2" y="2" width="3" height="1" fill="#000"/><rect x="3" y="3" width="1" height="1" fill="#000"/></svg>
<div style="left:10px;top:275px;width:595px;height:20px;background:#ffffff;background-image:conic-gradient(#d4d0c8 25%,#fff 25% 50%,#d4d0c8 50% 75%,#fff 75%);background-size:2px 2px"></div>
<div style="left:10px;top:275px;width:20px;height:20px;background:#d4d0c8;"></div>
<div style="left:10px;top:275px;width:20px;height:1px;background:#d4d0c8;"></div>
<div style="left:10px;top:275px;width:1px;height:20px;background:#d4d0c8;"></div>
<div style="left:11px;top:276px;width:18px;height:1px;background:#ffffff;"></div>
<div style="left:11px;top:276px;width:1px;height:18px;background:#ffffff;"></div>
<div style="left:10px;top:294px;width:20px;height:1px;background:#000000;"></div>
<div style="left:29px;top:275px;width:1px;height:20px;background:#000000;"></div>
<div style="left:11px;top:293px;width:18px;height:1px;background:#808080;"></div>
<div style="left:28px;top:276px;width:1px;height:18px;background:#808080;"></div>
<svg style="position:absolute;left:18px;top:282px;overflow:visible" width="4" height="7" viewBox="0 0 4 7" shape-rendering="crispEdges"><rect x="3" y="0" width="1" height="7" fill="#000"/><rect x="2" y="1" width="1" height="5" fill="#000"/><rect x="1" y="2" width="1" height="3" fill="#000"/><rect x="0" y="3" width="1" height="1" fill="#000"/></svg>
<div style="left:30px;top:275px;width:39px;height:20px;background:#d4d0c8;"></div>
<div style="left:30px;top:275px;width:39px;height:1px;background:#d4d0c8;"></div>
<div style="left:30px;top:275px;width:1px;height:20px;background:#d4d0c8;"></div>
<div style="left:31px;top:276px;width:37px;height:1px;background:#ffffff;"></div>
<div style="left:31px;top:276px;width:1px;height:18px;background:#ffffff;"></div>
<div style="left:30px;top:294px;width:39px;height:1px;background:#000000;"></div>
<div style="left:68px;top:275px;width:1px;height:20px;background:#000000;"></div>
<div style="left:31px;top:293px;width:37px;height:1px;background:#808080;"></div>
<div style="left:67px;top:276px;width:1px;height:18px;background:#808080;"></div>
<div style="left:586px;top:275px;width:19px;height:20px;background:#d4d0c8;"></div>
<div style="left:586px;top:275px;width:19px;height:1px;background:#d4d0c8;"></div>
<div style="left:586px;top:275px;width:1px;height:20px;background:#d4d0c8;"></div>
<div style="left:587px;top:276px;width:17px;height:1px;background:#ffffff;"></div>
<div style="left:587px;top:276px;width:1px;height:18px;background:#ffffff;"></div>
<div style="left:586px;top:294px;width:19px;height:1px;background:#000000;"></div>
<div style="left:604px;top:275px;width:1px;height:20px;background:#000000;"></div>
<div style="left:587px;top:293px;width:17px;height:1px;background:#808080;"></div>
<div style="left:603px;top:276px;width:1px;height:18px;background:#808080;"></div>
<div style="left:587px;top:276px;width:17px;height:1px;background:#d4d0c8;"></div>
<div style="left:587px;top:276px;width:1px;height:18px;background:#d4d0c8;"></div>
<svg style="position:absolute;left:594px;top:282px;overflow:visible" width="4" height="7" viewBox="0 0 4 7" shape-rendering="crispEdges"><rect x="0" y="0" width="1" height="7" fill="#000"/><rect x="1" y="1" width="1" height="5" fill="#000"/><rect x="2" y="2" width="1" height="3" fill="#000"/><rect x="3" y="3" width="1" height="1" fill="#000"/></svg>
<div style="left:605px;top:275px;width:20px;height:20px;background:#d4d0c8;"></div>
<div style="left:18px;top:120px;width:90px;height:149px;border:5px solid #ff0000;border-radius:2px;background:transparent"></div>
<svg style="position:absolute;left:70px;top:126px;overflow:visible" width="20" height="26" viewBox="0 0 20 26"><polygon points="10,4 14.6,4 14.6,24 10,24 10,11 5,13.5 5,9.2" fill="#ff0000"/></svg>
<div style="left:8px;top:297px;width:619px;height:3px;background:#000000;"></div>
<span class="t" style="left:11px;top:305px;">Číslo</span>
<div style="left:12px;top:316px;width:89px;height:22px;background:#ffffff;"></div>
<div style="left:12px;top:316px;width:88px;height:1px;background:#808080;"></div>
<div style="left:12px;top:316px;width:1px;height:21px;background:#808080;"></div>
<div style="left:13px;top:317px;width:86px;height:1px;background:#000000;"></div>
<div style="left:13px;top:317px;width:1px;height:19px;background:#000000;"></div>
<span class="t" style="left:15px;top:320px;">CAT.080.0040</span>
<span class="t" style="left:103px;top:305px;">Druh</span>
<div style="left:104px;top:316px;width:73px;height:22px;background:#ffffff;"></div>
<div style="left:104px;top:316px;width:72px;height:1px;background:#808080;"></div>
<div style="left:104px;top:316px;width:1px;height:21px;background:#808080;"></div>
<div style="left:105px;top:317px;width:70px;height:1px;background:#000000;"></div>
<div style="left:105px;top:317px;width:1px;height:19px;background:#000000;"></div>
<div style="left:156px;top:318px;width:19px;height:18px;background:#d4d0c8;"></div>
<div style="left:156px;top:318px;width:19px;height:1px;background:#d4d0c8;"></div>
<div style="left:156px;top:318px;width:1px;height:18px;background:#d4d0c8;"></div>
<div style="left:157px;top:319px;width:17px;height:1px;background:#ffffff;"></div>
<div style="left:157px;top:319px;width:1px;height:16px;background:#ffffff;"></div>
<div style="left:156px;top:335px;width:19px;height:1px;background:#000000;"></div>
<div style="left:174px;top:318px;width:1px;height:18px;background:#000000;"></div>
<div style="left:157px;top:334px;width:17px;height:1px;background:#808080;"></div>
<div style="left:173px;top:319px;width:1px;height:16px;background:#808080;"></div>
<div style="left:161px;top:326px;width:2px;height:2px;background:#000000;"></div>
<div style="left:165px;top:326px;width:2px;height:2px;background:#000000;"></div>
<div style="left:169px;top:326px;width:2px;height:2px;background:#000000;"></div>
<span class="t" style="left:108px;top:320px;">sla-camb</span>
<span class="t" style="left:179px;top:305px;">Popis</span>
<div style="left:180px;top:316px;width:309px;height:22px;background:#ffffff;"></div>
<div style="left:180px;top:316px;width:308px;height:1px;background:#808080;"></div>
<div style="left:180px;top:316px;width:1px;height:21px;background:#808080;"></div>
<div style="left:181px;top:317px;width:306px;height:1px;background:#000000;"></div>
<div style="left:181px;top:317px;width:1px;height:19px;background:#000000;"></div>
<span class="t" style="left:183px;top:320px;">GALAXY 512/5A 512 smyček, max. 5A</span>
<span class="t" style="left:495px;top:305px;">MJ</span>
<div style="left:492px;top:316px;width:41px;height:22px;background:#ffffff;"></div>
<div style="left:492px;top:316px;width:40px;height:1px;background:#808080;"></div>
<div style="left:492px;top:316px;width:1px;height:21px;background:#808080;"></div>
<div style="left:493px;top:317px;width:38px;height:1px;background:#000000;"></div>
<div style="left:493px;top:317px;width:1px;height:19px;background:#000000;"></div>
<span class="t" style="left:495px;top:320px;">ks</span>
<span class="t" style="left:535px;top:305px;">Hmotnost [kg]</span>
<div style="left:536px;top:316px;width:85px;height:22px;background:#ffffff;"></div>
<div style="left:536px;top:316px;width:84px;height:1px;background:#808080;"></div>
<div style="left:536px;top:316px;width:1px;height:21px;background:#808080;"></div>
<div style="left:537px;top:317px;width:82px;height:1px;background:#000000;"></div>
<div style="left:537px;top:317px;width:1px;height:19px;background:#000000;"></div>
<span class="t" style="left:11px;top:341px;">Cena 1</span>
<div style="left:12px;top:352px;width:101px;height:22px;background:#ffffff;"></div>
<div style="left:12px;top:352px;width:100px;height:1px;background:#808080;"></div>
<div style="left:12px;top:352px;width:1px;height:21px;background:#808080;"></div>
<div style="left:13px;top:353px;width:98px;height:1px;background:#000000;"></div>
<div style="left:13px;top:353px;width:1px;height:19px;background:#000000;"></div>
<span class="t" style="right:526px;top:356px;">15 795,00 Kč</span>
<span class="t" style="left:115px;top:341px;">Cena 2</span>
<div style="left:116px;top:352px;width:101px;height:22px;background:#ffffff;"></div>
<div style="left:116px;top:352px;width:100px;height:1px;background:#808080;"></div>
<div style="left:116px;top:352px;width:1px;height:21px;background:#808080;"></div>
<div style="left:117px;top:353px;width:98px;height:1px;background:#000000;"></div>
<div style="left:117px;top:353px;width:1px;height:19px;background:#000000;"></div>
<span class="t" style="right:422px;top:356px;">16 830,00 Kč</span>
<span class="t" style="left:219px;top:341px;">Cena 3</span>
<div style="left:220px;top:352px;width:101px;height:22px;background:#ffffff;"></div>
<div style="left:220px;top:352px;width:100px;height:1px;background:#808080;"></div>
<div style="left:220px;top:352px;width:1px;height:21px;background:#808080;"></div>
<div style="left:221px;top:353px;width:98px;height:1px;background:#000000;"></div>
<div style="left:221px;top:353px;width:1px;height:19px;background:#000000;"></div>
<span class="t" style="left:323px;top:341px;">Ceníková cena</span>
<div style="left:324px;top:352px;width:101px;height:22px;background:#ffffff;"></div>
<div style="left:324px;top:352px;width:100px;height:1px;background:#808080;"></div>
<div style="left:324px;top:352px;width:1px;height:21px;background:#808080;"></div>
<div style="left:325px;top:353px;width:98px;height:1px;background:#000000;"></div>
<div style="left:325px;top:353px;width:1px;height:19px;background:#000000;"></div>
<span class="t" style="right:214px;top:356px;">22 000,00 Kč</span>
<span class="t" style="left:427px;top:341px;">Náklady</span>
<div style="left:428px;top:352px;width:101px;height:22px;background:#ffffff;"></div>
<div style="left:428px;top:352px;width:100px;height:1px;background:#808080;"></div>
<div style="left:428px;top:352px;width:1px;height:21px;background:#808080;"></div>
<div style="left:429px;top:353px;width:98px;height:1px;background:#000000;"></div>
<div style="left:429px;top:353px;width:1px;height:19px;background:#000000;"></div>
<span class="t" style="right:110px;top:356px;">19 000,00 Kč</span>
<span class="t" style="left:535px;top:341px;">Montáž [min]</span>
<div style="left:536px;top:352px;width:85px;height:22px;background:#ffffff;"></div>
<div style="left:536px;top:352px;width:84px;height:1px;background:#808080;"></div>
<div style="left:536px;top:352px;width:1px;height:21px;background:#808080;"></div>
<div style="left:537px;top:353px;width:82px;height:1px;background:#000000;"></div>
<div style="left:537px;top:353px;width:1px;height:19px;background:#000000;"></div>
<span class="t" style="left:11px;top:377px;">Kde rezervovat</span>
<div style="left:12px;top:388px;width:101px;height:22px;background:#ffffff;"></div>
<div style="left:12px;top:388px;width:100px;height:1px;background:#808080;"></div>
<div style="left:12px;top:388px;width:1px;height:21px;background:#808080;"></div>
<div style="left:13px;top:389px;width:98px;height:1px;background:#000000;"></div>
<div style="left:13px;top:389px;width:1px;height:19px;background:#000000;"></div>
<div style="left:96px;top:390px;width:15px;height:18px;background:#d4d0c8;"></div>
<div style="left:96px;top:390px;width:15px;height:1px;background:#d4d0c8;"></div>
<div style="left:96px;top:390px;width:1px;height:18px;background:#d4d0c8;"></div>
<div style="left:97px;top:391px;width:13px;height:1px;background:#ffffff;"></div>
<div style="left:97px;top:391px;width:1px;height:16px;background:#ffffff;"></div>
<div style="left:96px;top:407px;width:15px;height:1px;background:#000000;"></div>
<div style="left:110px;top:390px;width:1px;height:18px;background:#000000;"></div>
<div style="left:97px;top:406px;width:13px;height:1px;background:#808080;"></div>
<div style="left:109px;top:391px;width:1px;height:16px;background:#808080;"></div>
<svg style="position:absolute;left:99px;top:397px;overflow:visible" width="7" height="4" viewBox="0 0 7 4" shape-rendering="crispEdges"><rect x="0" y="0" width="7" height="1" fill="#000"/><rect x="1" y="1" width="5" height="1" fill="#000"/><rect x="2" y="2" width="3" height="1" fill="#000"/><rect x="3" y="3" width="1" height="1" fill="#000"/></svg>
<span class="t" style="left:18px;top:392px;"></span>
<span class="t" style="left:15px;top:392px;">S</span>
<span class="t" style="left:115px;top:377px;">Č. skl. karty, výkonu</span>
<div style="left:116px;top:388px;width:93px;height:21px;background:#ffffff;"></div>
<div style="left:116px;top:388px;width:92px;height:1px;background:#808080;"></div>
<div style="left:116px;top:388px;width:1px;height:20px;background:#808080;"></div>
<div style="left:117px;top:389px;width:90px;height:1px;background:#000000;"></div>
<div style="left:117px;top:389px;width:1px;height:18px;background:#000000;"></div>
<div style="left:188px;top:390px;width:19px;height:17px;background:#d4d0c8;"></div>
<div style="left:188px;top:390px;width:19px;height:1px;background:#d4d0c8;"></div>
<div style="left:188px;top:390px;width:1px;height:17px;background:#d4d0c8;"></div>
<div style="left:189px;top:391px;width:17px;height:1px;background:#ffffff;"></div>
<div style="left:189px;top:391px;width:1px;height:15px;background:#ffffff;"></div>
<div style="left:188px;top:406px;width:19px;height:1px;background:#000000;"></div>
<div style="left:206px;top:390px;width:1px;height:17px;background:#000000;"></div>
<div style="left:189px;top:405px;width:17px;height:1px;background:#808080;"></div>
<div style="left:205px;top:391px;width:1px;height:15px;background:#808080;"></div>
<div style="left:193px;top:398px;width:2px;height:2px;background:#000000;"></div>
<div style="left:197px;top:398px;width:2px;height:2px;background:#000000;"></div>
<div style="left:201px;top:398px;width:2px;height:2px;background:#000000;"></div>
<span class="t" style="left:119px;top:391px;">SK000940</span>
<span class="t" style="left:234px;top:381px;">Poznámka 2</span>
<div style="left:302px;top:383px;width:25px;height:24px;background:#d4d0c8;"></div>
<div style="left:302px;top:383px;width:25px;height:1px;background:#ffffff;"></div>
<div style="left:302px;top:383px;width:1px;height:24px;background:#ffffff;"></div>
<div style="left:302px;top:406px;width:25px;height:1px;background:#000000;"></div>
<div style="left:326px;top:383px;width:1px;height:24px;background:#000000;"></div>
<div style="left:303px;top:405px;width:23px;height:1px;background:#808080;"></div>
<div style="left:325px;top:384px;width:1px;height:22px;background:#808080;"></div>
<svg style="position:absolute;left:302px;top:383px;overflow:visible" width="25" height="24" viewBox="0 0 25 24"><path d="M9.5 5.5c2-1 4-1 5 0l4 2c1 .5 1 2 0 2.5l-2 1 1 4c.5 1.5-1 3-2 3l-5-1.5c-1.5-.5-2.5-1-3-2l2-2z" fill="#fff" stroke="#000" stroke-width="1"/><path d="M12 7l3 1.5 1 3-1 3" fill="none" stroke="#b0b0b0" stroke-width="1"/><path d="M4.5 4.5l5 4.5-4 5" fill="none" stroke="#ff0000" stroke-width="2.4"/><path d="M5 4l2 4" stroke="#c00000" stroke-width="1.2"/><circle cx="17" cy="8" r="0.7" fill="#c00000"/><circle cx="12" cy="17" r="0.7" fill="#c00000"/></svg>
<div style="left:332px;top:381px;width:289px;height:64px;background:#ffffff;"></div>
<div style="left:332px;top:381px;width:288px;height:1px;background:#808080;"></div>
<div style="left:332px;top:381px;width:1px;height:63px;background:#808080;"></div>
<div style="left:333px;top:382px;width:286px;height:1px;background:#000000;"></div>
<div style="left:333px;top:382px;width:1px;height:61px;background:#000000;"></div>
<span class="t" style="left:11px;top:413px;">Č. do rozpočtu</span>
<div style="left:12px;top:424px;width:101px;height:22px;background:#ffffff;"></div>
<div style="left:12px;top:424px;width:100px;height:1px;background:#808080;"></div>
<div style="left:12px;top:424px;width:1px;height:21px;background:#808080;"></div>
<div style="left:13px;top:425px;width:98px;height:1px;background:#000000;"></div>
<div style="left:13px;top:425px;width:1px;height:19px;background:#000000;"></div>
<span class="t" style="left:115px;top:413px;">Obj. číslo</span>
<div style="left:116px;top:424px;width:93px;height:22px;background:#ffffff;"></div>
<div style="left:116px;top:424px;width:92px;height:1px;background:#808080;"></div>
<div style="left:116px;top:424px;width:1px;height:21px;background:#808080;"></div>
<div style="left:117px;top:425px;width:90px;height:1px;background:#000000;"></div>
<div style="left:117px;top:425px;width:1px;height:19px;background:#000000;"></div>
<span class="t" style="left:119px;top:428px;">GALAXY 512/5A</span>
<span class="t" style="left:211px;top:413px;letter-spacing:-0.4px">Multimediální poznámka</span>
<div style="left:212px;top:424px;width:113px;height:21px;background:#ffffff;"></div>
<div style="left:212px;top:424px;width:112px;height:1px;background:#808080;"></div>
<div style="left:212px;top:424px;width:1px;height:20px;background:#808080;"></div>
<div style="left:213px;top:425px;width:110px;height:1px;background:#000000;"></div>
<div style="left:213px;top:425px;width:1px;height:18px;background:#000000;"></div>
<div style="left:304px;top:426px;width:19px;height:17px;background:#d4d0c8;"></div>
<div style="left:304px;top:426px;width:19px;height:1px;background:#d4d0c8;"></div>
<div style="left:304px;top:426px;width:1px;height:17px;background:#d4d0c8;"></div>
<div style="left:305px;top:427px;width:17px;height:1px;background:#ffffff;"></div>
<div style="left:305px;top:427px;width:1px;height:15px;background:#ffffff;"></div>
<div style="left:304px;top:442px;width:19px;height:1px;background:#000000;"></div>
<div style="left:322px;top:426px;width:1px;height:17px;background:#000000;"></div>
<div style="left:305px;top:441px;width:17px;height:1px;background:#808080;"></div>
<div style="left:321px;top:427px;width:1px;height:15px;background:#808080;"></div>
<div style="left:309px;top:434px;width:2px;height:2px;background:#000000;"></div>
<div style="left:313px;top:434px;width:2px;height:2px;background:#000000;"></div>
<div style="left:317px;top:434px;width:2px;height:2px;background:#000000;"></div>
<span class="t" style="left:216px;top:427px;">(MMemo)</span>
<div style="left:285px;top:426px;width:19px;height:17px;background:#d4d0c8;"></div>
<div style="left:285px;top:426px;width:19px;height:1px;background:#d4d0c8;"></div>
<div style="left:285px;top:426px;width:1px;height:17px;background:#d4d0c8;"></div>
<div style="left:286px;top:427px;width:17px;height:1px;background:#ffffff;"></div>
<div style="left:286px;top:427px;width:1px;height:15px;background:#ffffff;"></div>
<div style="left:285px;top:442px;width:19px;height:1px;background:#000000;"></div>
<div style="left:303px;top:426px;width:1px;height:17px;background:#000000;"></div>
<div style="left:286px;top:441px;width:17px;height:1px;background:#808080;"></div>
<div style="left:302px;top:427px;width:1px;height:15px;background:#808080;"></div>
<div style="left:286px;top:427px;width:17px;height:1px;background:#d4d0c8;"></div>
<div style="left:286px;top:427px;width:1px;height:15px;background:#d4d0c8;"></div>
<div style="left:290px;top:434px;width:9px;height:2px;background:#000000;"></div>
<div style="left:54px;top:474px;width:1px;height:19px;background:#808080;"></div>
<div style="left:55px;top:474px;width:1px;height:19px;background:#ffffff;"></div>
<div style="left:107px;top:474px;width:1px;height:19px;background:#808080;"></div>
<div style="left:108px;top:474px;width:1px;height:19px;background:#ffffff;"></div>
<div style="left:160px;top:474px;width:1px;height:19px;background:#808080;"></div>
<div style="left:161px;top:474px;width:1px;height:19px;background:#ffffff;"></div>
<div style="left:230px;top:474px;width:1px;height:19px;background:#808080;"></div>
<div style="left:231px;top:474px;width:1px;height:19px;background:#ffffff;"></div>
<div style="left:303px;top:474px;width:1px;height:19px;background:#808080;"></div>
<div style="left:304px;top:474px;width:1px;height:19px;background:#ffffff;"></div>
<div style="left:383px;top:474px;width:1px;height:19px;background:#808080;"></div>
<div style="left:384px;top:474px;width:1px;height:19px;background:#ffffff;"></div>
<div style="left:456px;top:474px;width:1px;height:19px;background:#808080;"></div>
<div style="left:457px;top:474px;width:1px;height:19px;background:#ffffff;"></div>
<div style="left:527px;top:474px;width:1px;height:19px;background:#808080;"></div>
<div style="left:528px;top:474px;width:1px;height:19px;background:#ffffff;"></div>
<span class="t" style="left:71px;top:479px;"><u>!aaa</u></span>
<span class="t" style="left:123px;top:479px;"><u>cen-</u></span>
<span class="t" style="left:172px;top:479px;"><u>cen-8013</u></span>
<span class="t" style="left:242px;top:479px;"><u>cen-c21m</u></span>
<span class="t" style="left:314px;top:479px;"><u>cen-c21m-d</u></span>
<span class="t" style="left:396px;top:479px;"><u>cen-c22m</u></span>
<span class="t" style="left:468px;top:479px;"><u>cen-c32m</u></span>
<span class="t" style="left:540px;top:479px;"><u>cen-c36m</u></span>
<div style="left:593px;top:478px;width:16px;height:1px;background:#ffffff;"></div>
<div style="left:593px;top:478px;width:1px;height:15px;background:#ffffff;"></div>
<div style="left:608px;top:479px;width:1px;height:14px;background:#808080;"></div>
<div style="left:609px;top:478px;width:1px;height:15px;background:#000000;"></div>
<svg style="position:absolute;left:599px;top:484px;overflow:visible" width="4" height="7" viewBox="0 0 4 7" shape-rendering="crispEdges"><rect x="3" y="0" width="1" height="7" fill="#ffffff"/><rect x="2" y="1" width="1" height="5" fill="#ffffff"/><rect x="1" y="2" width="1" height="3" fill="#ffffff"/><rect x="0" y="3" width="1" height="1" fill="#ffffff"/></svg>
<svg style="position:absolute;left:598px;top:483px;overflow:visible" width="4" height="7" viewBox="0 0 4 7" shape-rendering="crispEdges"><rect x="3" y="0" width="1" height="7" fill="#808080"/><rect x="2" y="1" width="1" height="5" fill="#808080"/><rect x="1" y="2" width="1" height="3" fill="#808080"/><rect x="0" y="3" width="1" height="1" fill="#808080"/></svg>
<div style="left:610px;top:478px;width:16px;height:1px;background:#ffffff;"></div>
<div style="left:610px;top:478px;width:1px;height:15px;background:#ffffff;"></div>
<div style="left:625px;top:479px;width:1px;height:14px;background:#808080;"></div>
<div style="left:626px;top:478px;width:1px;height:15px;background:#000000;"></div>
<svg style="position:absolute;left:617px;top:483px;overflow:visible" width="4" height="7" viewBox="0 0 4 7" shape-rendering="crispEdges"><rect x="0" y="0" width="1" height="7" fill="#000"/><rect x="1" y="1" width="1" height="5" fill="#000"/><rect x="2" y="2" width="1" height="3" fill="#000"/><rect x="3" y="3" width="1" height="1" fill="#000"/></svg>
<div style="left:4px;top:499px;width:61px;height:1px;background:#808080;"></div>
<div style="left:4px;top:499px;width:1px;height:17px;background:#808080;"></div>
<div style="left:4px;top:515px;width:61px;height:1px;background:#ffffff;"></div>
<div style="left:64px;top:499px;width:1px;height:17px;background:#ffffff;"></div>
<div style="left:66px;top:499px;width:565px;height:1px;background:#808080;"></div>
<div style="left:66px;top:499px;width:1px;height:17px;background:#808080;"></div>
<div style="left:66px;top:515px;width:565px;height:1px;background:#ffffff;"></div>
<div style="left:630px;top:499px;width:1px;height:17px;background:#ffffff;"></div>
<span class="t" style="left:5px;top:501px;">0/26</span>
<svg style="position:absolute;left:617px;top:502px;overflow:visible" width="13" height="13" viewBox="0 0 13 13" shape-rendering="crispEdges"><rect x="10" y="12" width="1" height="1" fill="#808080"/><rect x="11" y="11" width="1" height="1" fill="#808080"/><rect x="12" y="10" width="1" height="1" fill="#808080"/><rect x="9" y="12" width="1" height="1" fill="#808080"/><rect x="10" y="11" width="1" height="1" fill="#808080"/><rect x="11" y="10" width="1" height="1" fill="#808080"/><rect x="12" y="9" width="1" height="1" fill="#808080"/><rect x="8" y="12" width="1" height="1" fill="#ffffff"/><rect x="9" y="11" width="1" height="1" fill="#ffffff"/><rect x="10" y="10" width="1" height="1" fill="#ffffff"/><rect x="11" y="9" width="1" height="1" fill="#ffffff"/><rect x="12" y="8" width="1" height="1" fill="#ffffff"/><rect x="6" y="12" width="1" height="1" fill="#808080"/><rect x="7" y="11" width="1" height="1" fill="#808080"/><rect x="8" y="10" width="1" height="1" fill="#808080"/><rect x="9" y="9" width="1" height="1" fill="#808080"/><rect x="10" y="8" width="1" height="1" fill="#808080"/><rect x="11" y="7" width="1" height="1" fill="#808080"/><rect x="12" y="6" width="1" height="1" fill="#808080"/><rect x="5" y="12" width="1" height="1" fill="#808080"/><rect x="6" y="11" width="1" height="1" fill="#808080"/><rect x="7" y="10" width="1" height="1" fill="#808080"/><rect x="8" y="9" width="1" height="1" fill="#808080"/><rect x="9" y="8" width="1" height="1" fill="#808080"/><rect x="10" y="7" width="1" height="1" fill="#808080"/><rect x="11" y="6" width="1" height="1" fill="#808080"/><rect x="12" y="5" width="1" height="1" fill="#808080"/><rect x="4" y="12" width="1" height="1" fill="#ffffff"/><rect x="5" y="11" width="1" height="1" fill="#ffffff"/><rect x="6" y="10" width="1" height="1" fill="#ffffff"/><rect x="7" y="9" width="1" height="1" fill="#ffffff"/><rect x="8" y="8" width="1" height="1" fill="#ffffff"/><rect x="9" y="7" width="1" height="1" fill="#ffffff"/><rect x="10" y="6" width="1" height="1" fill="#ffffff"/><rect x="11" y="5" width="1" height="1" fill="#ffffff"/><rect x="12" y="4" width="1" height="1" fill="#ffffff"/><rect x="2" y="12" width="1" height="1" fill="#808080"/><rect x="3" y="11" width="1" height="1" fill="#808080"/><rect x="4" y="10" width="1" height="1" fill="#808080"/><rect x="5" y="9" width="1" height="1" fill="#808080"/><rect x="6" y="8" width="1" height="1" fill="#808080"/><rect x="7" y="7" width="1" height="1" fill="#808080"/><rect x="8" y="6" width="1" height="1" fill="#808080"/><rect x="9" y="5" width="1" height="1" fill="#808080"/><rect x="10" y="4" width="1" height="1" fill="#808080"/><rect x="11" y="3" width="1" height="1" fill="#808080"/><rect x="12" y="2" width="1" height="1" fill="#808080"/><rect x="1" y="12" width="1" height="1" fill="#808080"/><rect x="2" y="11" width="1" height="1" fill="#808080"/><rect x="3" y="10" width="1" height="1" fill="#808080"/><rect x="4" y="9" width="1" height="1" fill="#808080"/><rect x="5" y="8" width="1" height="1" fill="#808080"/><rect x="6" y="7" width="1" height="1" fill="#808080"/><rect x="7" y="6" width="1" height="1" fill="#808080"/><rect x="8" y="5" width="1" height="1" fill="#808080"/><rect x="9" y="4" width="1" height="1" fill="#808080"/><rect x="10" y="3" width="1" height="1" fill="#808080"/><rect x="11" y="2" width="1" height="1" fill="#808080"/><rect x="12" y="1" width="1" height="1" fill="#808080"/><rect x="0" y="12" width="1" height="1" fill="#ffffff"/><rect x="1" y="11" width="1" height="1" fill="#ffffff"/><rect x="2" y="10" width="1" height="1" fill="#ffffff"/><rect x="3" y="9" width="1" height="1" fill="#ffffff"/><rect x="4" y="8" width="1" height="1" fill="#ffffff"/><rect x="5" y="7" width="1" height="1" fill="#ffffff"/><rect x="6" y="6" width="1" height="1" fill="#ffffff"/><rect x="7" y="5" width="1" height="1" fill="#ffffff"/><rect x="8" y="4" width="1" height="1" fill="#ffffff"/><rect x="9" y="3" width="1" height="1" fill="#ffffff"/><rect x="10" y="2" width="1" height="1" fill="#ffffff"/><rect x="11" y="1" width="1" height="1" fill="#ffffff"/><rect x="12" y="0" width="1" height="1" fill="#ffffff"/></svg>
</body></html>
